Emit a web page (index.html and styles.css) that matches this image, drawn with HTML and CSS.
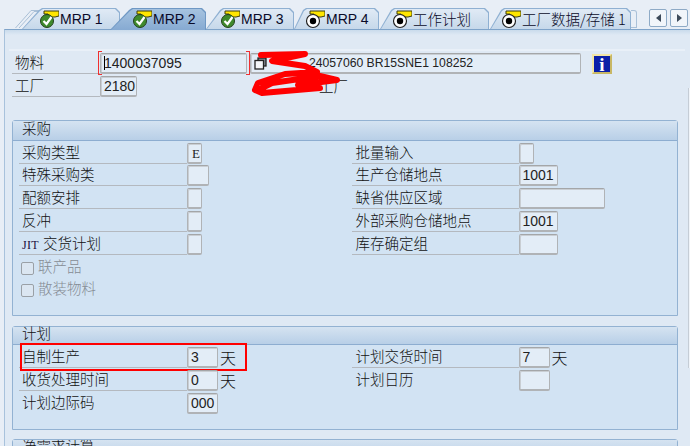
FILE: index.html
```html
<!DOCTYPE html>
<html lang="zh">
<head>
<meta charset="utf-8">
<title>MRP 2</title>
<link rel="stylesheet" href="styles.css">
</head>
<body>
<svg class="defs" width="0" height="0" aria-hidden="true">
  <symbol id="ok" viewBox="0 0 20 20">
    <path d="M5 2h15v5l-4 1h-5l-2-3H5z" fill="#ffe600" stroke="#3d3d10" stroke-width="1"/>
    <circle cx="8" cy="12" r="6.5" fill="#3f8a2c" stroke="#24401c"/>
    <path d="M4.500 12l3 3 5-7" fill="none" stroke="#fff" stroke-width="2.200"/>
  </symbol>
  <symbol id="target" viewBox="0 0 20 20">
    <path d="M5 2h15v5l-4 1h-5l-2-3H5z" fill="#ffe600" stroke="#3d3d10" stroke-width="1"/>
    <circle cx="8" cy="12" r="6.5" fill="#fff" stroke="#222" stroke-width="1.200"/>
    <circle cx="8" cy="12" r="3.200" fill="#000"/>
  </symbol>
</svg>
<div class="page">
  <div class="tabbar">
    <svg class="stack-left" viewBox="0 0 24 21" aria-hidden="true"><path d="M0.500 20 L16 2.500 H24 M4 20 L19 3.500 H24" fill="none" stroke="#a9bfd6"/></svg>
    <div class="tab tab-1"><svg class="tab-icon"><use href="#ok"/></svg><span>MRP 1</span></div>
    <div class="tab tab-2 tab-active"><svg class="tab-icon"><use href="#ok"/></svg><span>MRP 2</span></div>
    <div class="tab tab-3"><svg class="tab-icon"><use href="#ok"/></svg><span>MRP 3</span></div>
    <div class="tab tab-4"><svg class="tab-icon"><use href="#target"/></svg><span>MRP 4</span></div>
    <div class="tab tab-5"><svg class="tab-icon"><use href="#target"/></svg><span>工作计划</span></div>
    <div class="tab tab-6"><svg class="tab-icon"><use href="#target"/></svg><span>工厂数据/存储 1</span></div>
    <div class="tab-stack"></div>
    <div class="scroll-btns">
      <div class="scroll-btn"><i class="arrow-left"></i></div>
      <div class="scroll-btn"><i class="arrow-right"></i></div>
    </div>
  </div>
  <div class="panel">
    <div class="head">
      <div class="head-row">
        <div class="label head-label">物料</div>
        <div class="field field-material selected"><i class="cursor"></i>1400037095</div>
        <div class="field field-desc">
          <svg class="copy-icon" viewBox="0 0 13 13"><rect x="4" y="1" width="8" height="8" fill="#7f8790" stroke="#222" stroke-width="1.300"/><rect x="1" y="3.500" width="8.500" height="8.500" fill="#f4f6f8" stroke="#222" stroke-width="1.300"/></svg>
          <span class="desc-text">24057060 BR15SNE1 108252</span>
        </div>
        <div class="info-btn"><span>i</span></div>
      </div>
      <div class="head-row head-row-2">
        <div class="label head-label">工厂</div>
        <div class="field field-plant">2180</div>
        <div class="plant-name">工厂</div>
      </div>
    </div>

    <section class="group group-buy">
      <div class="group-title">采购</div>
      <div class="cols">
        <div class="col">
          <div class="row"><div class="label">采购类型</div><div class="field w-1 serif">E</div></div>
          <div class="row row-short"><div class="label">特殊采购类</div><div class="field w-2"></div></div>
          <div class="row"><div class="label">配额安排</div><div class="field w-1"></div></div>
          <div class="row"><div class="label">反冲</div><div class="field w-1"></div></div>
          <div class="row"><div class="label"><span class="jit">JIT</span> 交货计划</div><div class="field w-1"></div></div>
          <div class="check"><i class="box"></i>联产品</div>
          <div class="check"><i class="box"></i>散装物料</div>
        </div>
        <div class="col col-right">
          <div class="row"><div class="label">批量输入</div><div class="field w-1"></div></div>
          <div class="row row-short"><div class="label">生产仓储地点</div><div class="field w-4">1001</div></div>
          <div class="row"><div class="label">缺省供应区域</div><div class="field w-8"></div></div>
          <div class="row"><div class="label">外部采购仓储地点</div><div class="field w-4">1001</div></div>
          <div class="row"><div class="label">库存确定组</div><div class="field w-4"></div></div>
        </div>
      </div>
    </section>

    <section class="group group-plan">
      <div class="group-title">计划</div>
      <div class="cols">
        <div class="col">
          <div class="row row-marked"><div class="label">自制生产</div><div class="field w-3">3</div><div class="unit">天</div></div>
          <div class="row"><div class="label">收货处理时间</div><div class="field w-3">0</div><div class="unit">天</div></div>
          <div class="row row-plain"><div class="label">计划边际码</div><div class="field w-3">000</div></div>
        </div>
        <div class="col col-right">
          <div class="row"><div class="label">计划交货时间</div><div class="field w-3">7</div><div class="unit">天</div></div>
          <div class="row row-plain"><div class="label">计划日历</div><div class="field w-3"></div></div>
        </div>
      </div>
    </section>

    <section class="group group-net">
      <div class="group-title">净需求计算</div>
    </section>
  </div>
  <svg class="scribble" viewBox="0 0 690 446" aria-hidden="true">
    <path d="M261 55 L305 54 L272 61 L305 66 L317 72 L285 74 L258 83 L255 90 L262 93 L320 88 L298 85 L337 80 L320 76 L272 83 L262 88" fill="none" stroke="#f00" stroke-width="6" stroke-linejoin="round" stroke-linecap="round"/>
  </svg>
  <div class="scrollbar"></div>
</div>
</body>
</html>
```

FILE: styles.css
```css
*, *::before, *::after { box-sizing: border-box; }
html, body { margin: 0; padding: 0; }
body {
  width: 690px;
  height: 446px;
  overflow: hidden;
  background: #e8eef6;
  color: #111;
  font-family: "Noto Sans CJK SC", "Liberation Sans", sans-serif;
  font-size: 14.500px;
  font-weight: 300;
}
.defs { position: absolute; }
.page { position: relative; width: 690px; height: 446px; overflow: hidden; }

/* tabs */
.tabbar { display: flex; align-items: flex-end; height: 29px; padding-left: 15px; }
.stack-left { width: 24px; height: 21px; flex: none; margin-right: -17px; }
.tab {
  --s: 13px;
  position: relative;
  display: flex;
  align-items: center;
  height: 21px;
  background: #8fb0d2;
  font-family: "Liberation Sans", "Noto Sans CJK SC", sans-serif;
  font-size: 14px;
  font-weight: 400;
  color: #0a0a28;
  white-space: nowrap;
  clip-path: polygon(0 100%, var(--s) 2px, calc(var(--s) + 3px) 0, calc(100% - 4px) 0, 100% 4px, 100% 100%);
}
.tab::before {
  content: "";
  position: absolute;
  inset: 1px 1px 0 1px;
  background: linear-gradient(#e0eaf5, #c6d8ea);
  clip-path: polygon(0 100%, var(--s) 2px, calc(var(--s) + 3px) 0, calc(100% - 4px) 0, 100% 4px, 100% 100%);
}
.tab > * { position: relative; }
.tab-icon { width: 20px; height: 20px; flex: none; margin-right: 1px; }
.tab-1 { --s: 17px; width: 98px; padding-left: 17px; }
.tab-active { --s: 19px; background: #6f98c4; z-index: 2; height: 22px; margin-bottom: -1px; margin-left: -10px; width: 96px; padding-left: 22px; }
.tab-active::before { inset: 1px 1px 0 1px; background: linear-gradient(#a6c3e0, #86aad2); }
.tab-3 { --s: 14px; width: 88px; padding-left: 14px; }
.tab-4 { --s: 9px; margin-left: 0; width: 85px; padding-left: 11px; }
.tab-5 { --s: 11px; margin-left: 1px; width: 109px; padding-left: 12px; }
.tab-6 { --s: 11px; margin-left: 1px; width: 141px; padding-left: 11px; }
.tab-5, .tab-6 { font-family: "Noto Sans CJK SC", sans-serif; font-weight: 300; font-size: 14.500px; }
.tab-stack { width: 6px; height: 18px; margin-bottom: 1px; border: 1px solid #a9c0d8; border-left: 0; border-radius: 0 3px 0 0; }
.scroll-btns { display: flex; gap: 3px; margin-left: 12px; margin-bottom: 2px; }
.scroll-btn {
  display: flex; align-items: center; justify-content: center;
  width: 18px; height: 18px;
  background: #f1f5fa;
  border: 1px solid #8eaac6;
  border-radius: 2px;
}
.arrow-left, .arrow-right { width: 0; height: 0; border-top: 4px solid transparent; border-bottom: 4px solid transparent; }
.arrow-left { border-right: 5px solid #3c4a5a; }
.arrow-right { border-left: 5px solid #3c4a5a; }

/* panel */
.panel {
  margin-left: 4px;
  height: 417px;
  padding: 19px 0 0 7px;
  border-top: 1px solid #7fa3c9;
  border-left: 1px solid #a8c2dc;
  background: linear-gradient(#c9dbec, #dfe9f4 5px);
}

/* header */
.head { height: 71px; margin: 0 5px 0 -3px; padding: 2px 0 0 3px; border-top: 2px solid #e9f0f8; }
.head-row { display: flex; align-items: flex-end; height: 21px; }
.head-row-2 { margin-top: 2px; }
.field-material { position: relative; width: 147px; padding-left: 2px; background: #dbe5ef; }
.selected::before, .selected::after {
  content: "";
  position: absolute;
  top: -3px; bottom: -3px;
  width: 4px;
  border: 1px solid #f03030;
}
.selected::before { left: -3px; border-right: 0; }
.selected::after { right: -4px; border-left: 0; }
.cursor { display: inline-block; width: 1px; height: 14px; background: #000; vertical-align: -2px; margin-right: -1px; }
.field-desc { display: flex; align-items: center; width: 331px; margin-left: 3px; padding-left: 1px; background: #dbe5ef; }
.copy-icon { width: 13px; height: 13px; flex: none; }
.desc-text { margin-left: 42px; font-size: 12.200px; }
.field-plant { width: 37px; padding-left: 2px; }
.plant-name { margin-left: 182px; line-height: 17px; height: 20px; }
.info-btn {
  display: flex; align-items: center; justify-content: center;
  width: 20px; height: 20px;
  margin-left: 11px;
  background: #0b1fa8;
  border: 2px solid #f3e6a6;
  border-right-color: #c8b765;
  border-bottom-color: #c8b765;
  color: #fff;
  font-family: "Liberation Serif", serif;
  font-weight: 700;
  font-size: 19px;
  line-height: 1;
}

/* groups */
.group {
  width: 666px;
  margin-bottom: 10px;
  background: #d2e3f3;
  border: 1px solid #93b2d2;
  border-radius: 3px 3px 0 0;
}
.group-buy { height: 196px; }
.group-plan { height: 104px; margin-bottom: 9px; }
.group-net { height: 40px; }
.group-title {
  height: 20px;
  padding-left: 9px;
  line-height: 14px;
  background: linear-gradient(#d5e3f1, #b8cfe7);
  border-bottom: 1px solid #8dadd0;
}
.group-plan .group-title { height: 18px; line-height: 11px; }
.group-net .group-title { line-height: 9px; overflow: hidden; }
.cols { display: flex; padding-left: 6px; }
.col { width: 333px; }
.col-right { width: 326px; }

/* rows */
.row { position: relative; display: flex; align-items: flex-end; height: 23px; }
.row-short { height: 22px; }
.label {
  width: 168px;
  height: 21px;
  line-height: 17px;
  padding-left: 3px;
  border-bottom: 1px solid #b4b9bf;
  white-space: nowrap;
}
.col-right .label { width: 167px; padding-left: 4px; }
.row-plain .label { border-bottom-color: transparent; }
.head-label.label { padding-left: 3px; width: 88px; }
.jit { font-family: "Liberation Serif", serif; font-size: 12px; font-weight: 400; letter-spacing: .3px; margin-right: 1px; color: #201040; }
.field {
  height: 21px;
  padding: 0 2px 0 3px;
  background: #e3edf7;
  border-style: solid;
  border-color: #a4a6a8 #b0b3b6 #b0b3b6 #b0b3b6;
  border-width: 1px 1px 2px 1px;
  border-radius: 2px;
  box-shadow: inset 1px 1px 0 #c9ced3;
  font-family: "Liberation Sans", sans-serif;
  font-size: 14px;
  font-weight: 400;
  line-height: 19px;
  color: #222;
  white-space: nowrap;
}
.serif { font-family: "Liberation Serif", serif; font-size: 13px; padding-left: 4px; }
.w-1 { width: 15px; }
.w-2 { width: 22px; }
.w-3 { width: 31px; }
.w-4 { width: 39px; }
.w-8 { width: 86px; }
.unit { margin-left: 2px; line-height: 20px; height: 21px; font-size: 16px; }
.row-marked::after {
  content: "";
  position: absolute;
  left: 1px; top: -2px;
  width: 227px; height: 28px;
  border: 2px solid #f00;
}
.check {
  display: flex; align-items: flex-start; gap: 4px;
  height: 22px;
  line-height: 21px;
  margin-left: 2px;
  color: #868c94;
}
.box { width: 13px; height: 13px; margin-top: 7px; background: #dbe6f1; border: 1px solid #9aa0a6; border-radius: 2px; }

/* overlays */
.scribble { position: absolute; left: 0; top: 0; width: 690px; height: 446px; }
.scrollbar { position: absolute; left: 688px; top: 88px; width: 2px; height: 280px; background: #f0f4f9; border-left: 1px solid #c5cdd6; }
```
